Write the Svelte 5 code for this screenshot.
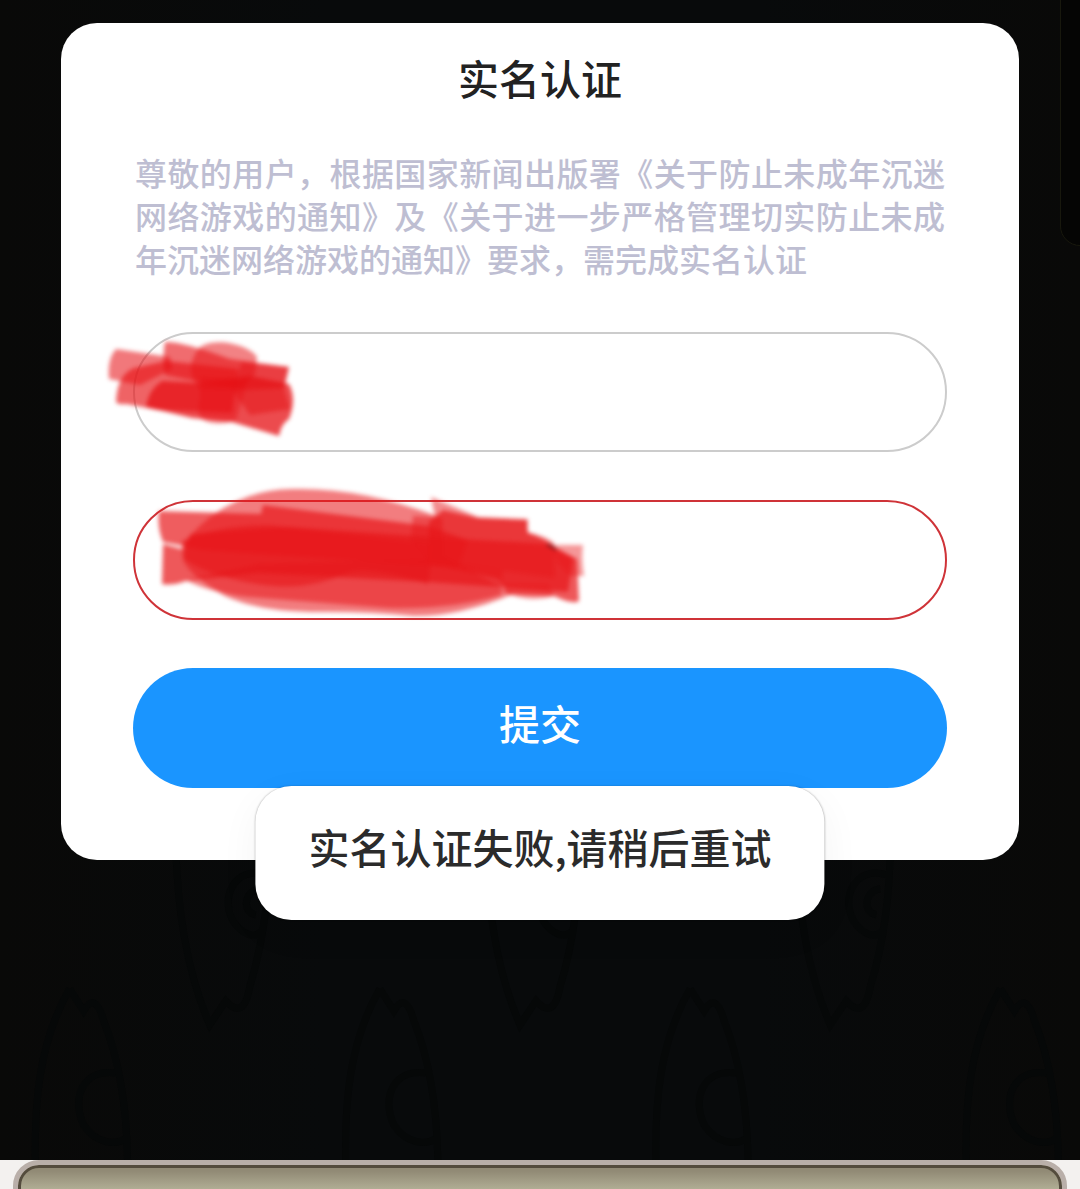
<script>
  let name = $state('');
  let idNumber = $state('');

  const flames = [
    { x: 30, y: 980 }, { x: 340, y: 980 }, { x: 650, y: 980 }, { x: 960, y: 980 },
  ];
  const drops = [{ x: 172, y: 840 }, { x: 482, y: 840 }, { x: 792, y: 840 }];
</script>

<div class="page">
  <main class="scene">
    <svg class="pattern" viewBox="0 0 1080 1159" preserveAspectRatio="xMidYMin slice" aria-hidden="true">
      {#each flames as f}
        <path transform="translate({f.x} {f.y})" d="M40 8C10 60 4 120 6 190M40 8L54 30Q66 10 74 40Q98 100 98 190M86 92C52 88 42 118 54 144C66 162 86 166 98 156" />
      {/each}
      {#each drops as d}
        <path transform="translate({d.x} {d.y})" d="M4 0Q6 110 38 184L54 160Q72 180 78 146Q98 80 98 0M94 34C62 24 46 60 64 84C76 98 86 96 92 88M88 48C72 50 70 72 84 74" />
      {/each}
    </svg>
    <div class="side-tab" aria-hidden="true"></div>

    <div class="dialog-wrap">
      <form class="dialog" aria-labelledby="dialog-title" onsubmit={(e) => e.preventDefault()}>
        <h1 id="dialog-title">实名认证</h1>
        <p>尊敬的用户，根据国家新闻出版署《关于防止未成年沉迷网络游戏的通知》及《关于进一步严格管理切实防止未成年沉迷网络游戏的通知》要求，需完成实名认证</p>

        <div class="field">
          <input type="text" aria-label="姓名" bind:value={name} />
          <svg class="scribble name" viewBox="0 0 200 110" aria-hidden="true">
            <g fill="#e61216">
              <path opacity=".57" d="M16 20Q7 30 9 50L40 56L72 40L70 28Z" />
              <path opacity=".66" d="M34 39Q17 46 16 73Q18 76 26 75L58 81L132 84L138 40L66 32Z" />
              <path opacity=".62" d="M65 13Q62 28 65 46L142 61L184 59L189 38L130 30Q82 12 65 13Z" />
              <path opacity=".53" d="M100 18C118 7 150 17 157 28L155 45L140 60H100Q82 40 100 18Z" />
              <path opacity=".76" d="M62 52Q49 60 46 78L92 89L132 93L179 107Q181 95 189 90Q197 70 189 55L150 47L99 54Z" />
              <path opacity=".45" d="M100 48L148 50L136 91Q118 98 103 91Q96 86 100 69Z" />
              <path opacity=".5" d="M142 33L189 38L184 59L190 80L150 86L132 60Z" />
            </g>
          </svg>
        </div>

        <div class="field invalid">
          <input type="text" aria-label="身份证号" aria-invalid="true" bind:value={idNumber} />
          <svg class="scribble id" viewBox="0 0 440 140" aria-hidden="true">
            <g fill="#e8181b">
              <path opacity=".56" d="M30 58Q72 10 134 9Q205 7 284 38L286 76L355 114Q300 137 255 136Q215 132 170 132Q103 133 67 116Q32 96 25 80Z" />
              <path opacity=".7" d="M1 31Q-1 47 5 62L45 70L300 88L310 60L270 46L105 25L103 34Z" />
              <path opacity=".72" d="M5 64L4 104Q14 106 28 101L100 93L270 102L410 112L415 78L390 64L285 58L130 47L33 54L24 69Z" />
              <path opacity=".6" d="M24 61Q62 45 111 45L275 65L270 104Q206 84 187 94Q145 113 93 103Q48 95 25 78Z" />
              <path opacity=".55" d="M28 100L101 84L274 79L345 90L343 115Q292 130 230 128L90 117Q50 112 28 100Z" />
              <path opacity=".5" d="M273 17L277 37L255 36L253 60L270 80L397 98L396 63Q388 56 369 52L370 39L320 37Z" />
              <path opacity=".72" d="M285 30L320 38L369 40L370 53Q388 59 398 68L419 79L421 121Q415 125 396 116L350 114L341 99L270 83L271 42Z" />
              <path opacity=".45" d="M392 65H425Q423 77 426 96L412 96L400 83ZM344 111Q370 124 396 116L390 104H344Z" />
            </g>
            <path d="M389 65Q395 66 398 70" fill="none" stroke="#641318" stroke-width="2" />
          </svg>
        </div>

        <button type="submit">提交</button>
      </form>
      <div class="toast" role="alert">实名认证失败,请稍后重试</div>
    </div>
  </main>

  <footer class="tray"><div class="tray-frame"></div></footer>
</div>

<style>
  :global(body) {
    margin: 0;
    background: #080909;
  }
  .page {
    display: flex;
    flex-direction: column;
    min-height: 100vh;
    font-family: "Noto Sans CJK SC", sans-serif;
    font-weight: 500;
  }
  .scene {
    position: relative;
    flex: 1;
    overflow: hidden;
    padding: 23px 61px 300px;
    background: linear-gradient(90deg, #090908, #080a0b 30%, #080a0b 70%, #090908);
    box-sizing: border-box;
  }
  .pattern {
    position: absolute;
    inset: 0;
    width: 100%;
    height: 100%;
    fill: none;
    stroke: #060808;
    stroke-width: 7;
  }
  .side-tab {
    position: absolute;
    top: -20px;
    right: -20px;
    width: 38px;
    height: 264px;
    border: 1px solid #18180d;
    border-radius: 22px;
    background: #050504;
  }
  .dialog-wrap {
    position: relative;
  }
  .dialog {
    display: flex;
    flex-direction: column;
    padding: 26px 72px 72px;
    border-radius: 36px;
    background: #fff;
  }
  h1 {
    margin: 0;
    color: #222;
    font-size: 41px;
    line-height: 56px;
    font-weight: 500;
    text-align: center;
  }
  p {
    margin: 46px 2px 52px;
    color: #bebed2;
    font-size: 32px;
    line-height: 43px;
    text-align: justify;
  }
  .field {
    position: relative;
    display: flex;
    margin-bottom: 48px;
  }
  input {
    flex: 1;
    min-width: 0;
    height: 120px;
    box-sizing: border-box;
    padding: 0 48px;
    border: 2px solid #ccc;
    border-radius: 60px;
    background: #fff;
    color: #222;
    font: inherit;
    font-size: 32px;
    outline: none;
  }
  .invalid input {
    border-color: #cf3338;
  }
  .scribble {
    position: absolute;
    pointer-events: none;
    overflow: visible;
    filter: blur(2px);
  }
  .scribble.name {
    left: -33px;
    top: -3px;
    width: 200px;
    height: 110px;
  }
  .scribble.id {
    left: 25px;
    top: -20px;
    width: 440px;
    height: 140px;
  }
  button {
    height: 120px;
    padding: 0 0 12px;
    border: 0;
    border-radius: 60px;
    background: #1a95ff;
    color: #fff;
    font: inherit;
    font-size: 41px;
    cursor: pointer;
  }
  .toast {
    position: absolute;
    left: 50%;
    bottom: -60px;
    transform: translateX(-50%);
    padding: 32px 53px 46px;
    border-radius: 36px;
    background: #fff;
    box-shadow: 0 0 2px #0004, 0 12px 40px #0000000c;
    color: #2b2b2b;
    font-size: 41px;
    line-height: 56px;
    white-space: nowrap;
  }
  .tray {
    height: 30px;
    overflow: hidden;
    padding: 0 13px;
    background: #f3f1ef;
  }
  .tray-frame {
    height: 80px;
    box-sizing: border-box;
    border: 5px solid #b9afa9;
    border-radius: 26px;
    background: linear-gradient(#918a75 6px, #b0ad94 24px);
    box-shadow: inset 0 0 0 3px #544c3d;
  }
</style>
